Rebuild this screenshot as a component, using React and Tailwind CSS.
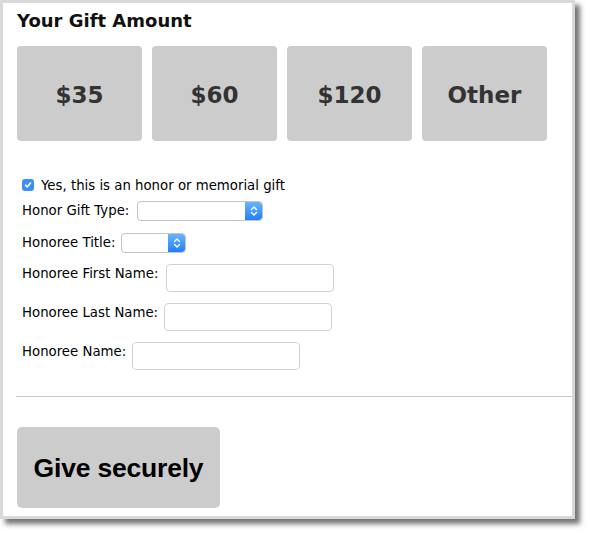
import React from 'react';

const amounts = ['$35', '$60', '$120', 'Other'];

function Chevrons() {
  return (
    <svg width="8" height="12" viewBox="0 0 8 12" fill="none" stroke="white" strokeWidth="1.4" strokeLinecap="round" strokeLinejoin="round">
      <path d="M1.5 4.5 L4 2 L6.5 4.5" />
      <path d="M1.5 7.5 L4 10 L6.5 7.5" />
    </svg>
  );
}

function FakeSelect({ width }) {
  return (
    <div className={`${width} h-[20px] flex rounded-[4px] border border-[#c4c4c4] bg-white overflow-hidden`}>
      <div className="flex-1" />
      <div className="w-[17px] h-full flex items-center justify-center bg-gradient-to-b from-[#6ab4fd] to-[#1f7ff8] rounded-r-[3px]">
        <Chevrons />
      </div>
    </div>
  );
}

function TextField() {
  return <div className="w-[168px] h-[28px] rounded-[4px] border border-[#d2d2d2] bg-white" />;
}

function Row({ label, children, className, gap = 'mr-[6px]' }) {
  return (
    <div className={`flex items-start pl-[5px] ${className}`}>
      <span className={`pt-[2px] leading-[16px] ${gap}`}>{label}</span>
      {children}
    </div>
  );
}

export default function App() {
  return (
    <div className="w-[589px] h-[534px] bg-white font-['DejaVu_Sans',Verdana,sans-serif]">
      <div className="w-[575px] h-[519px] border-[3px] border-[#d9d9d9] bg-white shadow-[5px_5px_5px_rgba(0,0,0,0.55)]">
        <div className="pl-[14px] pt-[7px]">
          <h2 className="text-[18px] leading-[22px] font-bold text-[#111]">Your Gift Amount</h2>

          <div className="mt-[14px] flex gap-[10px]">
            {amounts.map((a) => (
              <button
                key={a}
                className="w-[125px] h-[95px] pt-[3px] rounded-[4px] bg-[#cccccc] text-[23px] font-bold text-[#333] flex items-center justify-center"
              >
                {a}
              </button>
            ))}
          </div>

          <div className="text-[13.3px] text-black">
            <div className="mt-[36px] flex items-start pl-[5px]">
              <span className="mt-[2px] w-[12px] h-[12px] rounded-[3px] bg-[#3b8ff6] flex items-center justify-center">
                <svg width="8" height="8" viewBox="0 0 8 8" fill="none" stroke="white" strokeWidth="1.6" strokeLinecap="round" strokeLinejoin="round">
                  <path d="M1.5 4.2 L3.2 5.9 L6.5 2" />
                </svg>
              </span>
              <span className="ml-[7px] pt-[1px] leading-[16px]">Yes, this is an honor or memorial gift</span>
            </div>

            <Row label="Honor Gift Type:" className="mt-[7px]" gap="mr-[8px]">
              <FakeSelect width="w-[126px]" />
            </Row>
            <Row label="Honoree Title:" className="mt-[12px]">
              <FakeSelect width="w-[65px]" />
            </Row>
            <Row label="Honoree First Name:" className="mt-[11px]" gap="mr-[8px]">
              <TextField />
            </Row>
            <Row label="Honoree Last Name:" className="mt-[11px]">
              <TextField />
            </Row>
            <Row label="Honoree Name:" className="mt-[11px]">
              <TextField />
            </Row>
          </div>

          <div className="mt-[26px] ml-[-1px] h-px bg-[#cccccc]" />

          <button className="mt-[30px] w-[203px] h-[81px] pt-[2px] rounded-[5px] bg-[#cccccc] flex items-center justify-center font-['Liberation_Sans',Arial,sans-serif] font-bold text-[26.5px] tracking-[-0.2px] text-black">
            Give securely
          </button>
        </div>
      </div>
    </div>
  );
}
